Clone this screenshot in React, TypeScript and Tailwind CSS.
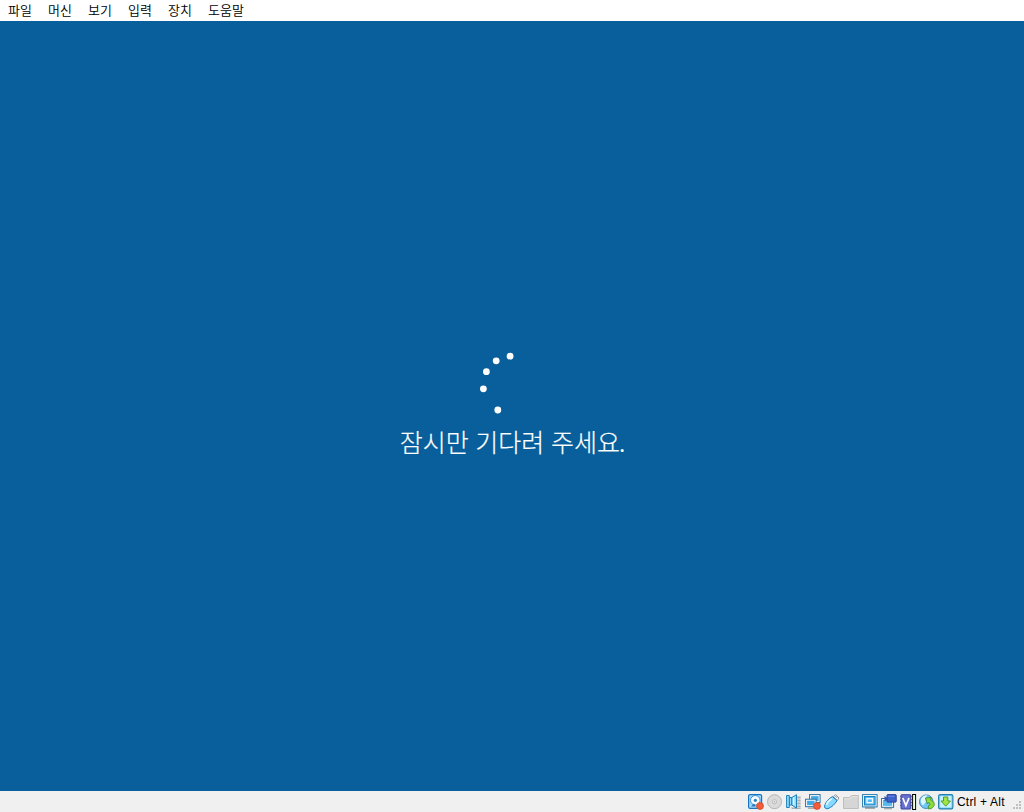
import React from "react";

const menus = ["파일", "머신", "보기", "입력", "장치", "도움말"];

const dots = [
  [30.1, 4.2],
  [16.2, 8.8],
  [6.4, 19.7],
  [3.4, 36.8],
  [17.8, 58],
];

function Icon({ children, width = 16 }: { children: React.ReactNode; width?: number }) {
  return (
    <svg width={width} height="16" viewBox={`0 0 ${width} 16`} className="shrink-0">
      {children}
    </svg>
  );
}

function RedDot() {
  return <circle cx="12" cy="12" r="3.5" fill="#f25c38" stroke="#cf452b" strokeWidth="0.7" />;
}

function HardDisk() {
  return (
    <Icon>
      <rect x="0.6" y="0.6" width="13" height="13.8" rx="1.5" fill="#a3dcff" stroke="#1a74bd" strokeWidth="1.2" />
      <circle cx="7.3" cy="6.3" r="4.8" fill="#f8fdff" stroke="#3990d4" strokeWidth="1" />
      <circle cx="7.4" cy="6.3" r="1.6" fill="#2f80be" />
      <path d="M3 12.5h4.5L6 9.5z" fill="#2477b8" />
      <RedDot />
    </Icon>
  );
}

function Disc() {
  return (
    <Icon>
      <circle cx="7.5" cy="7.7" r="7" fill="#dadada" stroke="#b5b5b5" />
      <circle cx="7.5" cy="7.7" r="2.1" fill="#eee" stroke="#b0b0b0" strokeWidth="0.8" />
      <circle cx="7.5" cy="7.7" r="0.8" fill="#aaa" />
    </Icon>
  );
}

function Audio() {
  return (
    <Icon>
      <path d="M10 2h4.7v12.7H5V13h5z" fill="#cecece" />
      <path d="M11.5 3.5h3M11.5 6.5h3M11.5 9.5h3M11.5 12.5h3M6 14.5h8.5" stroke="#a5a5a5" strokeWidth=".8" />
      <path d="M.6 1.5h2.7v2h2.5L10.5.7v13.5L5.8 11H3.3v2.5H.6z" fill="#8fdcff" stroke="#1b82b9" />
      <path d="M3.3 3.5V11M5.8 3.5V11" stroke="#176b9f" />
      <path d="M7.6 3.5v7.5" stroke="#d7f7ff" strokeWidth="1.5" />
    </Icon>
  );
}

function Network() {
  return (
    <Icon>
      <path d="M6 10h9M3 14.2h7" stroke="#b0b0b0" strokeWidth="1.5" />
      <rect x="4.6" y=".6" width="10.5" height="8" fill="#fff" stroke="#286f9f" />
      <rect x="6.1" y="2.1" width="7.5" height="5" fill="#42aae5" />
      <rect x=".6" y="5.2" width="10.5" height="7.5" fill="#fff" stroke="#286f9f" />
      <rect x="2.1" y="6.7" width="7.5" height="4.5" fill="#42aae5" />
      <RedDot />
    </Icon>
  );
}

function Usb() {
  return (
    <Icon>
      <path d="m9.3 2.5 2.4-1.8L15 4l-1.8 2.5z" fill="#fafafa" stroke="#929292" />
      <path d="m11.5 2.2 1.5 1.5" stroke="#777" />
      <path d="M8.5 2.6c-3 1.4-6.7 5.2-7.8 8.7C0 13.6 1.4 15.2 4 14.6c3.5-1.2 7-4.5 9-8z" fill="#87d9ff" stroke="#1879bf" />
      <path d="M7.7 4.7C4.8 6.5 3 8.7 2.3 11" stroke="#dcf7ff" strokeWidth="1.8" fill="none" />
    </Icon>
  );
}

function Folder() {
  return (
    <Icon>
      <path d="M.5 3.5h6l2-2h6.8v13H.5z" fill="#d6d6d6" stroke="#bebebe" />
      <path d="M1.5 4.8H7l2-2h5.5" stroke="#e5e5e5" fill="none" />
    </Icon>
  );
}

function Display() {
  return (
    <Icon>
      <path d="M3 15h10v-2H3z" fill="#aaa" />
      <rect x=".6" y=".6" width="14.5" height="12.3" fill="#fff" stroke="#2478ae" />
      <rect x="2.5" y="2.5" width="10.6" height="8.5" fill="#54bdf4" stroke="#1780bd" />
      <rect x="5" y="4.7" width="5.5" height="4" fill="#54bdf4" stroke="#f2fcff" strokeWidth="1.3" />
    </Icon>
  );
}

function Capture() {
  return (
    <Icon>
      <path d="M3 14.5h8" stroke="#aaa" strokeWidth="1.6" />
      <rect x=".6" y="4.5" width="12" height="8.8" fill="#fff" stroke="#286d9f" />
      <rect x="2" y="5.9" width="9.2" height="6" fill="#55b9ed" />
      <rect x="6" y=".6" width="9.2" height="7.5" rx=".7" fill="#3e62cb" stroke="#263f9d" />
      <path d="M6 3.8 3.5 2v5.6L6 6z" fill="#3a50af" />
      <path d="M7.2 2.2h6.5" stroke="#6f8fe5" />
    </Icon>
  );
}

function Processor() {
  return (
    <Icon width={17}>
      <path d="M0 2.5h12M0 5.5h12M0 8.5h12M0 11.5h12" stroke="#7777b1" />
      <rect x="1" y=".7" width="9.8" height="14.3" rx=".5" fill="#6870cd" stroke="#3b439e" />
      <path d="m2.8 4 3.1 7.6L9 4" fill="none" stroke="#fff" strokeWidth="1.7" />
      <rect x="12.6" y=".5" width="3" height="15" fill="#eaffe0" stroke="#000" />
    </Icon>
  );
}

function MouseIntegration() {
  return (
    <Icon>
      <circle cx="7.2" cy="7.7" r="6.8" fill="#70c8f7" stroke="#468eb7" />
      <path d="M2 5C4 1.7 6 1.3 8.5 1.3L6 4.5l1 3.2-3 3.8C2.3 10 1.3 7.3 2 5z" fill="#dcf5ff" />
      <path d="m6.5 4 6-.5-1.1 2.2c3.7 1.9 4.8 4.4 3.2 6.7-1.2 1.8-3 2.6-5.2 2.5v-3.2c2-.3 1.9-1.8.5-3.2L8.4 10z" fill="#8edb3c" stroke="#458f2c" strokeWidth=".9" />
    </Icon>
  );
}

function Keyboard() {
  return (
    <Icon>
      <rect x=".6" y=".6" width="14.3" height="14.3" rx="1.7" fill="#77cff8" stroke="#247fae" strokeWidth="1.1" />
      <rect x="2.1" y="2.1" width="11.3" height="11.3" rx="1" fill="#c6f1ff" />
      <path d="M5.5 3h4.3v4h2.7l-4.8 5.2L2.9 7h2.6z" fill="#a2e443" stroke="#509f2c" />
    </Icon>
  );
}

export default function App() {
  return (
    <div className="flex h-[812px] w-[1024px] flex-col overflow-hidden bg-[#085f9b] font-['Liberation_Sans','Noto_Sans_CJK_KR',sans-serif]">
      <nav className="flex h-[21px] shrink-0 items-start gap-4 bg-white pl-2 font-['Noto_Sans_CJK_KR',sans-serif] text-[13px] font-[350] leading-[19px] tracking-[0.04px] text-black">
        {menus.map((menu) => (
          <span key={menu} className="whitespace-nowrap">{menu}</span>
        ))}
      </nav>
      <main className="flex min-h-0 flex-1 flex-col items-center pt-[331px]">
        <svg width="64" height="64" viewBox="0 0 64 64" className="shrink-0" fill="white">
          {dots.map(([x, y]) => <circle key={y} cx={x} cy={y} r="3.4" />)}
        </svg>
        <div className="mt-[7px] whitespace-nowrap pl-px font-['Noto_Sans_CJK_KR',sans-serif] text-[25px] font-light leading-[36px] text-white [-webkit-text-stroke:0.2px_white] [word-spacing:1px]">잠시만 기다려 주세요<span className="-ml-px">.</span></div>
      </main>
      <footer className="flex h-[21px] shrink-0 items-start bg-[#f0f0f0] pl-[748px] pt-[3px]">
        <div className="flex gap-[3px]">
          <HardDisk />
          <Disc />
          <Audio />
          <Network />
          <Usb />
          <Folder />
          <Display />
          <Capture />
          <div className="-mr-px flex"><Processor /></div>
          <MouseIntegration />
          <Keyboard />
        </div>
        <span className="ml-[3px] w-[50px] whitespace-nowrap text-[12px] leading-[16px] tracking-[0.2px] text-black">Ctrl + Alt</span>
        <svg width="12" height="12" viewBox="0 0 12 12" className="ml-[5px] mt-[6px]" fill="#bdbdbd">
          <path d="M7 1h2v2H7zM4 4h2v2H4zM7 4h2v2H7zM1 7h2v2H1zM4 7h2v2H4zM7 7h2v2H7z" />
        </svg>
      </footer>
    </div>
  );
}
